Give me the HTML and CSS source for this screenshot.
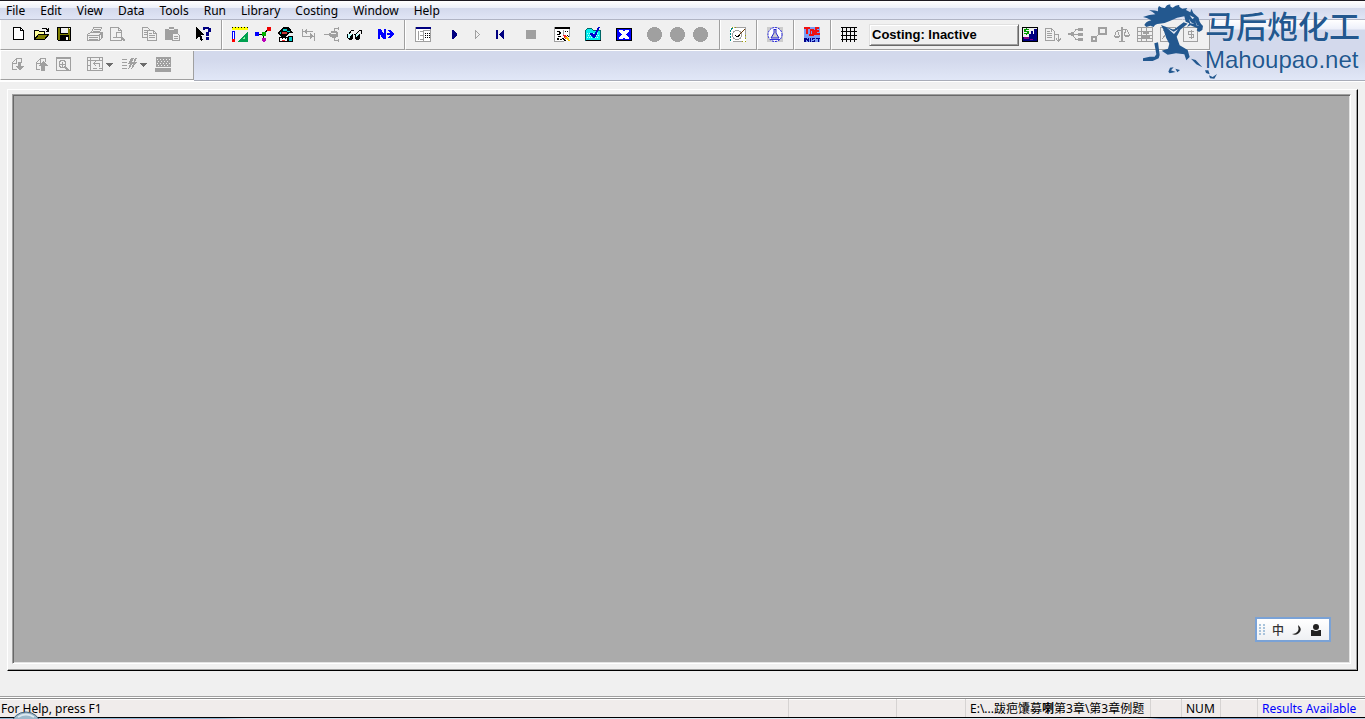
FILE: index.html
```html
<!DOCTYPE html>
<html lang="en">
<head>
<meta charset="utf-8">
<title>Process Simulator</title>
<link rel="stylesheet" href="styles.css">
</head>
<body>
<div class="app">
  <nav class="menubar" aria-label="Main menu">
    <button>File</button><button>Edit</button><button>View</button><button>Data</button><button>Tools</button><button>Run</button><button>Library</button><button>Costing</button><button>Window</button><button>Help</button>
  </nav>

  <div class="rebar">
    <div class="toolrow">
      <div class="group">
        <button class="tool" aria-label="New"><svg viewBox="0 0 16 16"><path class="fw" d="M3 0h7l4 4v9H3z"/><path class="lk" d="M3.500.5h7l3 3v9h-10zM10.500.5v3h3"/></svg></button>
        <button class="tool" aria-label="Open"><svg viewBox="0 0 16 16"><path fill="#ff9" d="M2 4h4l1 1h5v3H5l-3 5z"/><path fill="#808000" d="M5 8h11l-4 5H2z"/><path class="lk" d="M1.500 12.500v-9h4l1 1h5v3M1.500 12.500h10l4-5H5.500l-4 5M9 1.500h4l2 2M15.500 1v3h-3"/></svg></button>
        <button class="tool" aria-label="Save"><svg viewBox="0 0 16 16"><path d="M1 0h14v14H2l-1-1z"/><path fill="#808000" d="M2 1h2v6h8V1h2v12H2z"/><path fill="#f0f0f0" d="M5 1h7v5H5z"/><path d="M4 8h9v5H4z"/><path class="fw" d="M10 10h2v3h-2zM13 1h1v1h-1z"/></svg></button>
        <i class="gap"></i>
        <button class="tool dis" aria-label="Print"><svg viewBox="0 0 16 16"><path class="lg" d="M4.500 5.500l2-5h8l-2 5M7 2.500h6M6 4.500h6M.5 7.500l3-2h12v5l-3 3H.5zM0 8.500h12l3-3M12.500 8v5M2 10.500h9M2 12.500h9M14.500 7v4"/></svg></button>
        <button class="tool dis" aria-label="Print preview"><svg viewBox="0 0 16 16"><path class="lg" d="M.5.5h8l3 3v10H.5zM8.500.5v3h3M3 10.500h3"/><circle class="sg" cx="9" cy="8" r="3"/><path class="tg" d="M11 10l4 4"/></svg></button>
        <i class="gap"></i>
        <button class="tool dis" aria-label="Copy"><svg viewBox="0 0 16 16"><path class="lg" d="M6 10.500H1.500V.5h5l3 3M3 3.500h3M3 5.500h3M3 7.500h3M6.500 3.500h6l3 3v7h-9zM12 3.500v3h3M8 6.500h3M8 8.500h6M8 10.500h6"/></svg></button>
        <button class="tool dis" aria-label="Paste"><svg viewBox="0 0 16 16"><path class="fg" d="M1 2h4V0h5v2h4v4H8v7H1z"/><path class="fb" d="M5 2h5v1H5z"/><path class="lg" d="M8.500 6.500h5l2 2v5h-7zM10 9.500h4M10 11.500h4"/></svg></button>
        <i class="gap"></i>
        <button class="tool" aria-label="Context help"><svg viewBox="0 0 16 16"><path d="M1 0l8 8H6l2 5-2 1-2-5-3 3z"/><path class="fn" d="M8 0h2v3H8zM9 0h5v2H9zM13 1h3v4h-3zM11 5h3v4h-3zM11 10h3v3h-3z"/></svg></button>
      </div>
      <div class="group">
        <button class="tool" aria-label="Setup"><svg viewBox="0 0 16 16"><path fill="#ff0" d="M0 0h16v3H0z"/><path d="M0 0h1v1H0zM3 0h1v1H3zM6 0h1v1H6zM9 0h1v1H9zM12 0h1v1h-1zM15 0h1v1h-1z"/><path fill="#00f" d="M0 4h3v9H0z"/><path class="fw" d="M1 5h1v7H1z"/><path fill="#f00" d="M0 12h3v3H0z"/><path fill="#00a050" d="M16 4v11H5z"/><path fill="#8f9" d="M13 9v3h-3z"/></svg></button>
        <button class="tool" aria-label="Components"><svg viewBox="0 0 16 16"><path class="lk" d="M2 7.500h6l5-5M8.500 7v6"/><path fill="#00f" d="M0 5h4v4H0z"/><path fill="#00b000" d="M7 5h4v4H7z"/><path fill="#e00" d="M12 0h3l1 1v3h-4z"/><path fill="#b0b" d="M7 11h4v3l-2 1-2-1z"/></svg></button>
        <button class="tool" aria-label="Properties"><svg viewBox="0 0 16 16"><path d="M5 0h5l3 3 2 3h-4l-3 4H4L0 7V5l3-2z"/><path fill="#0cc" d="M5 2h4v2H5zM9 4h3v1H9zM2 5h1v2H2z"/><path fill="#c33" d="M4 5h5v2H4z"/><path d="M1 10h9v5H1zM10 9h5v6h-5z"/><path class="fw" d="M2 11h7v3H2z"/><path d="M4 11h1v1H4zM7 11h1v1H7z"/><path fill="#e33" d="M4 13h3v1H4z"/><path fill="#0cc" d="M11 10h3v4h-3z"/></svg></button>
        <button class="tool dis" aria-label="Streams"><svg viewBox="0 0 16 16"><path class="lg" d="M1.500 2v8M13.500 6v8M2 4.500h10M2 9.500h11"/><path class="fg" d="M3 4l3-3v7zM12 9L9 6v7z"/></svg></button>
        <button class="tool dis" aria-label="Blocks"><svg viewBox="0 0 16 16"><path class="lg" d="M0 7.500h8M10.500 4V1.500h4M10.500 11v2.500h4M14.500 0v3M14.500 12v3"/><path class="fg" d="M7 4h6v1h1v5h-2v1H8v-1H6V9H5V6h2z"/><path class="fb" d="M7 6h5v1H7z"/></svg></button>
        <button class="tool" aria-label="View specifications"><svg viewBox="0 0 16 16"><path class="lk" d="M1.500 7.500l3-4h2M8.500 7.500l4-4h2v3M7 7.500h2"/><path d="M0 7h6v4l-2 2H2l-2-2zM8 7h5v4l-2 2H9l-1-2z"/><path fill="#bff" d="M1 7h4l-3 5-1-1zM9 7h3l-3 4z"/></svg></button>
        <i class="gap"></i>
        <button class="tool" aria-label="Next"><svg viewBox="0 0 16 16"><path fill="#00f" d="M0 2h3l3 5V2h2v10H5L2 7v5H0zM9 6h3L9 3h3l4 3v2l-4 3H9l3-3H9z"/></svg></button>
      </div>
      <div class="group">
        <button class="tool" aria-label="Control panel"><svg viewBox="0 0 16 16"><path class="fw" d="M1 1h14v13H1z"/><path class="lg" d="M.5 0v14.500h15V2M3.500 4v9M5 4.500h3M5 8.500h3M5 12.500h3M8.500 3v11M9 3.500h6"/><path class="fn" d="M1 0h15v2H1z"/><path stroke="#000" stroke-dasharray="1 1" d="M10 6.500h5M10 8.500h5M10 10.500h5"/></svg></button>
        <i class="gap"></i>
        <button class="tool" aria-label="Run"><svg viewBox="0 0 16 16"><path class="fn" d="M6 3h1l4 4v1l-4 4H6z"/></svg></button>
        <button class="tool dis" aria-label="Step"><svg viewBox="0 0 16 16"><path class="lg" d="M6.500 3.500v8l4-4z"/></svg></button>
        <button class="tool" aria-label="Reinitialize"><svg viewBox="0 0 16 16"><path class="fn" d="M4 3h2v9H4zM11 3h1v9h-1L7 8V7z"/></svg></button>
        <i class="gap"></i>
        <button class="tool dis" aria-label="Stop"><svg viewBox="0 0 16 16"><path class="fg" d="M3 3h10v9H3z"/></svg></button>
        <i class="gap"></i>
        <button class="tool" aria-label="Edit results"><svg viewBox="0 0 16 16"><path class="fw" d="M1 1h14v13H1z"/><path class="lg" d="M.5 0v14.500h9M15.500 1v9M9.500 3v6"/><path d="M1 0h15v2H1zM3 4h3v1H3zM5 5h2v2H5zM3 7h3v1H3zM4 9h3v1H4zM3 11h2v2H3zM6 12h2v1H6zM11 4h1v1h-1zM13 4h1v1h-1z"/><path fill="#e22" d="M9 8h3l3 4h-4z"/><path fill="#fc0" d="M11 10h3l2 4h-2z"/><path class="lk" d="M8 11l4 3M13 8l2 2"/></svg></button>
        <i class="gap"></i>
        <button class="tool" aria-label="Check status"><svg viewBox="0 0 16 16"><path fill="#0ee" stroke="#066" d="M.5 13.500v-10l2-2h4l2 2h7v10z"/><path stroke="#bff" stroke-dasharray="1 1" d="M2 6.500h12M3 8.500h11M2 10.500h12"/><path stroke="#000" d="M1 13.500h15"/><path fill="#00c" d="M5 6h2l2 2 4-8h2l-5 11H8L5 8z"/></svg></button>
        <i class="gap"></i>
        <button class="tool" aria-label="Close results"><svg viewBox="0 0 16 16"><path fill="#00f" stroke="#000" d="M.5 1.500h15v12H.5z"/><path class="fw" d="M3 3h4l1 2 1-2h4v2l-3 2v1l3 2v2H9l-1-2-1 2H3v-2l3-2V7L3 5z"/></svg></button>
        <i class="gap"></i>
        <button class="tool dis" aria-label="Record"><svg viewBox="0 0 16 16"><circle class="fg" cx="7.500" cy="7.500" r="7.500"/></svg></button>
        <button class="tool dis" aria-label="Play"><svg viewBox="0 0 16 16"><circle class="fg" cx="7.500" cy="7.500" r="7.500"/></svg></button>
        <button class="tool dis" aria-label="Pause"><svg viewBox="0 0 16 16"><circle class="fg" cx="7.500" cy="7.500" r="7.500"/></svg></button>
      </div>
      <div class="group">
        <button class="tool" aria-label="Model analysis"><svg viewBox="0 0 16 16"><path class="fw" d="M0 0h16v15H0z"/><path class="lg" d="M4 .5h11.500v10M3 14.500h9"/><path fill="none" stroke="#088" stroke-dasharray="2 1" d="M.5 14V3l3-3"/><path fill="none" stroke="#a0a000" stroke-dasharray="1 2" d="M12 14.500h3.500V6M2 .5h4"/><circle class="sg" cx="7" cy="8" r="4.500"/><path class="lk" d="M5 8l2 2 3-2"/><path stroke="#630" d="M9 8l6-6"/></svg></button>
      </div>
      <div class="group">
        <button class="tool" aria-label="Distillation synthesis"><svg class="soft" viewBox="0 0 16 16"><path fill="#ccc" d="M0 0h16v15H0z"/><circle cx="8" cy="7.500" r="7" fill="#fff" stroke="#11d" stroke-dasharray="2 1"/><path fill="#ccc" stroke="#22c" d="M6.500 2.500h3M7 3v3l-3 5h8L9 6V3"/><path stroke="#33d" d="M3 12.500h10"/></svg></button>
      </div>
      <div class="group">
        <button class="tool" aria-label="NIST TDE"><svg viewBox="0 0 16 16"><path fill="#7a9cf5" d="M0 0h16v15H0z"/><path fill="#e11" d="M0 0h6v2H4v5H2V2H0zM6 2h3l2 2v3L9 9H5V7h1zM11 0h4v2h-2v1h2v2h-2v1h3v2h-5z"/><path fill="#7a9cf5" d="M7 4h1v3H7z"/><path fill="#008" d="M0 11h2l2 2v-2h1v4H4l-2-2v2H0zM6 11h1v4H6zM8 11h3v1H9v1h2v2H8v-1h2v-1H8zM12 11h4v1h-1v3h-1v-3h-2z"/></svg></button>
      </div>
      <div class="group">
        <button class="tool" aria-label="Grid"><svg viewBox="0 0 16 16"><path class="lk" d="M0 .5h16M0 4.500h16M0 8.500h16M0 12.500h16M1.500 0v15M5.500 0v15M9.500 0v15M13.500 0v15"/></svg></button>
        <i class="gap"></i>
        <button class="costing">Costing: Inactive</button>
        <button class="tool" aria-label="Economics"><svg viewBox="0 0 16 16"><path fill="#eee" stroke="#000" d="M.5.5h15v14H.5z"/><path class="fn" d="M1 10h6V7h2V4h2v3h1V2h3v12H1z"/><path fill="#808" d="M2 10h5v2H2zM8 12h3v1H8z"/><path fill="#090" d="M4 1h1v1h2v1H4v1h3v3H5v1H4V7H2V6h3V5H2V2h2z"/><path class="fw" d="M11 4h1v3h-1z"/></svg></button>
        <button class="tool dis" aria-label="Send to costing"><svg viewBox="0 0 16 16"><path class="lg" d="M.5 1.500h6l3 3v9h-9zM6.500 1v4M2 4.500h3M2 6.500h5M2 8.500h5M2 10.500h5M9 7.500h4.500v6M11 11.500l2.500 3 2.500-3"/></svg></button>
        <button class="tool dis" aria-label="Map"><svg viewBox="0 0 16 16"><path class="fg" d="M0 6h3V5h3v4H3V8H0zM10 1h5v3h-5zM10 6h5v3h-5zM10 11h5v3h-5z"/><path class="lg" d="M5 6.500l3-4h4M5 7.500h7M5 8.500l3 4h4"/></svg></button>
        <button class="tool dis" aria-label="Size"><svg viewBox="0 0 16 16"><path fill="none" stroke="#a0a0a0" stroke-width="2" d="M8 1h7v6H8zM1 10h4v4H1z"/><path class="lg" d="M5 9.500l3-2"/></svg></button>
        <button class="tool dis" aria-label="Evaluate"><svg viewBox="0 0 16 16"><path class="lg" d="M3 3.500h4M9 2.500h4M2.500 4L.5 9M3.500 4l2 5M12.500 2L10 8M12.500 2l3 6M5 14.500h6"/><path class="fg" d="M7 0h2v14H7zM0 9h6v1H5v1H1v-1H0zM10 8h6v1h-1v1h-4V9h-1z"/></svg></button>
        <button class="tool dis" aria-label="Equipment grid"><svg viewBox="0 0 16 16"><path class="lg" d="M.5.5h15v14H.5zM0 4.500h16M0 8.500h16M0 11.500h16M4.500 0v15M9.500 0v15"/><path class="fg" d="M6 4h6v3H6zM4 9h9v2H4z"/></svg></button>
        <button class="tool dis" aria-label="Investment"><svg viewBox="0 0 16 16"><path class="lg" d="M.5.5h15v14H.5zM2 12l4-5 3 2 5-7M3 3.500h4"/></svg></button>
        <button class="tool dis" aria-label="Cost summary"><svg viewBox="0 0 16 16"><path class="lg" d="M.5.5h14v14H.5zM10.500 4.500h-5v3h5v3h-5M8 3v9"/></svg></button>
      </div>
    </div>
    <div class="toolrow">
      <div class="group second">
        <button class="tool dis" aria-label="Import"><svg viewBox="0 0 16 16"><path class="lg" d="M7 12.500H2.500v-7l4-4h5v4M6.500 2v4h-4"/><path class="fg" d="M8 5h3v4h3l-4 5-5-5h3z"/></svg></button>
        <button class="tool dis" aria-label="Export"><svg viewBox="0 0 16 16"><path class="lg" d="M7 12.500H3.500v-7l4-4h5v3M7.500 2v4h-4"/><path class="fg" d="M10 4l5 5h-3v5H8V9H5z"/></svg></button>
        <button class="tool dis" aria-label="Zoom"><svg viewBox="0 0 16 16"><path class="lg" d="M.5.5h14v13H.5z"/><path class="fg" d="M0 0h15v2H0z"/><circle class="sg" cx="6.500" cy="7" r="3.500"/><path class="lg" d="M4 7.500h5M6.500 5v5"/><path class="tg" d="M9 10l4 4"/></svg></button>
        <i class="gap"></i>
        <button class="tool drop dis" aria-label="Flowsheet view"><svg viewBox="0 0 16 16"><path class="lg" d="M.5.5h15v13H.5zM3.500 0v14M0 3.500h16M0 8.500h3M6 11.500h4M12 11.500h3M7 6.500h5v3M9 4L7 6.500 9 9M12 1v2"/></svg><svg class="arrow" viewBox="0 0 7 4"><path d="M0 0h7L4 4H3z"/></svg></button>
        <button class="tool drop dis" aria-label="Stream results"><svg viewBox="0 0 16 16"><path class="lg" d="M1 2.500h5M1 5.500h5M1 8.500h5M1 11.500h5"/><path class="fg" d="M10 1h3l-2 4h2l-6 8 2-6H7zM14 1h2l-2 4h2l-6 8 2-6z"/></svg><svg class="arrow" viewBox="0 0 7 4"><path d="M0 0h7L4 4H3z"/></svg></button>
        <button class="tool dis" aria-label="Table"><svg viewBox="0 0 16 16"><path class="fg" d="M1 0h15v10H1zM0 11h16v4H0z"/><path stroke="#eee" stroke-dasharray="1 2" d="M2 2.500h13M3 4.500h12M2 6.500h13M3 8.500h12"/></svg></button>
      </div>
    </div>
  </div>

  <main class="frame"><div class="workspace"></div></main>

  <footer class="status">
    <div class="cell help">For Help, press F1</div>
    <div class="cell c1"></div>
    <div class="cell c2"></div>
    <div class="cell path">E:\...跋疤馕募<b>喇</b>第3章\第3章例题</div>
    <div class="cell c3"></div>
    <div class="cell num">NUM</div>
    <div class="cell c4"></div>
    <div class="cell results">Results Available</div>
  </footer>
  <div class="taskbar"></div>

  <svg class="orb" viewBox="0 0 30 8"><ellipse cx="15" cy="13" rx="14" ry="12" fill="#9db9cb" stroke="#45647c"/><path d="M7 6q8-5 16 0" fill="none" stroke="#dce8f0" stroke-width="2"/></svg>

  <div class="ime">
    <svg class="grip" viewBox="0 0 6 12"><path stroke="#a9c4dc" stroke-width="2" stroke-dasharray="2 1" d="M1 0v12M5 0v12"/></svg>
    <button lang="zh">中</button>
    <button aria-label="Half width"><svg viewBox="0 0 12 12"><path d="M7 1q5 4 1 8-3 3-7 1 4 0 6-3 1-2 0-6z"/></svg></button>
    <button aria-label="User"><svg viewBox="0 0 12 12"><circle cx="6" cy="3" r="3"/><path d="M1 6h2q3 2 6 0h2v6H1z"/></svg></button>
  </div>

  <div class="brand">
    <svg class="horse" viewBox="45 10 231 231">
      <path d="M58 82L52 76Q56 66 73 62Q58 53 48 52Q67 45 85 44Q76 35 66 32Q83 31 93 35Q91 24 96 19Q104 26 114 25Q120 13 131 15Q126 20 137 24Q147 15 157 16Q154 22 166 27L181 25L177 31L190 38L193 27L199 40L215 54Q216 68 228 79L226 91L216 97L209 92L212 86L190 77L180 82L187 71L176 66L172 50Q150 52 130 63Q112 72 97 72Q83 73 80 82L70 78Z"/>
      <path d="M102 76L140 90L170 68L182 72L160 90L149 111L158 137L182 151L188 172L178 182L172 164L147 161L122 165L104 153L123 147L127 132L118 116L110 92Z"/>
      <path d="M82 131L93 128L98 166L95 176L77 184L48 184L48 176L68 171L83 171L88 164ZM192 177L206 181L226 203L208 194ZM124 216L129 204L140 203L132 212L146 217L128 221ZM145 207L159 211L151 218ZM234 212L244 212L248 224L237 220ZM246 227L257 232L270 223L262 237L249 236Z"/>
      <path class="cut" d="M188 47l14 7-6 4zM205 61l4 14 8 3-9-1zM164 54l8 14-5-3zM186 58l6 10 10 5-12-2zM118 83l22 13 14-8-13 15z"/>
    </svg>
    <div class="words"><div class="zh" lang="zh">马后炮化工</div><div class="en">Mahoupao.net</div></div>
  </div>
</div>
</body>
</html>
```
FILE: styles.css
```css
* { box-sizing: border-box; }
body { margin: 0; font-family: "Noto Sans", "Noto Sans CJK SC", sans-serif; font-size: 12px; color: #000; background: #f0f0f0; }
button { margin: 0; padding: 0; border: 0; background: none; font: inherit; color: inherit; }
svg { display: block; }
.app { position: relative; display: flex; flex-direction: column; min-height: 100vh; }

.menubar { display: flex; gap: 15px; height: 20px; padding-left: 6px; border-top: 1px solid #1c1a22; border-bottom: 1px solid #b0b4c4; background: linear-gradient(#fff 0, #edf0f9 7px, #d3d9ec 7px, #e0e5f5 100%); }
.menubar button { line-height: 18px; padding-top: 1px; }

.rebar { display: flex; flex-direction: column; gap: 1px; height: 62px; border-bottom: 1px solid #fff; background: linear-gradient(#fff 0, #edf0fa 9px, #d3d9ec 10px, #d3d9ec 40px, #e1e7f7 60px); box-shadow: inset 0 -1px #a8acb8; }
.toolrow { display: flex; }
.group { display: flex; align-items: center; height: 30px; padding: 0 6px; border: solid #a0a0a0; border-width: 0 1px 1px 0; border-left: 1px solid #fff; background: #f0f0f0; box-shadow: 0 1px #fff; }
.group.second { height: 29px; padding-right: 18px; }
.gap { width: 8px; }
.tool { display: flex; align-items: center; width: 23px; height: 22px; padding-left: 3px; }
.tool svg { width: 16px; height: 16px; shape-rendering: crispEdges; }
.tool .soft { shape-rendering: auto; }
.tool.drop { width: 34px; gap: 3px; }
.tool .arrow { width: 7px; height: 4px; fill: #6c6c6c; }
.costing { width: 150px; height: 22px; padding-left: 2px; text-align: left; font: bold 13px "Liberation Sans", sans-serif; background: #f0f0f0; border: 1px solid; border-color: #e0e0e0 #696969 #696969 #e0e0e0; box-shadow: inset 1px 1px #fff, inset -1px -1px #a0a0a0; }

.fw { fill: #fff; } .fg { fill: #a0a0a0; } .fn { fill: #000080; } .fb { fill: #f0f0f0; }
.lk { fill: none; stroke: #000; }
.lg, .sg { fill: none; stroke: #a0a0a0; }
.tg { fill: none; stroke: #a0a0a0; stroke-width: 2; }

.frame { flex: 1; display: flex; margin: 7px 7px 25px; padding: 4px 6px 6px 4px; border: 1px solid; border-color: #fff #000 #000 #fff; box-shadow: inset -1px -1px #a0a0a0; }
.workspace { flex: 1; border: 1px solid; border-color: #a0a0a0 #fff #fff #a0a0a0; background: #ababab; box-shadow: inset 1px 1px #696969, inset -1px -1px #e3e3e3; }

.status { display: flex; height: 21px; padding-top: 2px; border-top: 1px solid #a0a0a0; background: #f0eceb; box-shadow: inset 0 1px #fff, inset 0 2px #8c8c8c, inset 0 3px #fff; }
.cell { height: 18px; line-height: 19px; padding-left: 4px; border-left: 1px solid #d6d3d2; white-space: nowrap; overflow: hidden; }
.help { flex: 1; padding-left: 1px; border-left: 0; }
.c1 { width: 108px; } .c2 { width: 69px; } .path { width: 185px; } .c3 { width: 31px; } .num { width: 39px; } .c4 { width: 37px; }
.results { width: 108px; color: #00f; }
.taskbar { height: 2px; border-top: 1px solid #000; background: linear-gradient(90deg, #8fb8d4 0, #8fb8d4 16%, #cfe4f2 18%, #e6eef6 84%, #7a9cc4 85%, #7a9cc4 97%, #c4d4e4 98%); }
.orb { position: absolute; left: 11px; bottom: 0; width: 30px; height: 8px; }

.ime { position: absolute; right: 34px; bottom: 77px; display: flex; align-items: center; gap: 7px; width: 76px; height: 25px; padding-left: 2px; border: 2px solid #7aa2d6; background: linear-gradient(#fff, #eef0f3); color: #333; }
.ime svg { width: 12px; height: 12px; fill: #222; }
.ime .grip { width: 6px; }
.ime button { font: 500 12px/16px "Noto Sans CJK SC", sans-serif; }

.brand { position: absolute; right: 5px; top: 3px; display: flex; color: #23588f; pointer-events: none; }
.horse { width: 77px; height: 77px; fill: #23588f; }
.horse .cut { fill: #e6eaf5; }
.words { width: 155px; margin-left: -14px; text-shadow: 0 0 1px #fff; }
.zh { font: 500 31px/43px "Noto Sans CJK SC", sans-serif; white-space: nowrap; }
.en { font: 24px/28px "Liberation Sans", sans-serif; }
```
